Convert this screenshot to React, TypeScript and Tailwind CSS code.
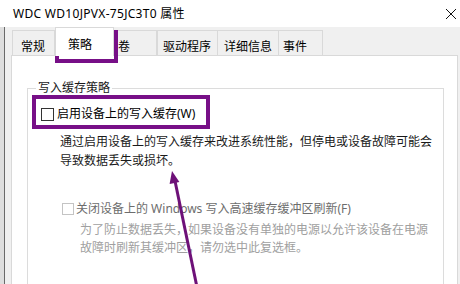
import React from "react";

const font = { fontFamily: '"Noto Sans", "Noto Sans CJK SC", sans-serif' };

function Tab({ label, className, textClass }: { label: string; className: string; textClass: string }) {
  return (
    <div className={`flex h-[25px] items-center border border-b-0 border-[#d9d9d9] bg-[#f0f0f0] pt-[7px] ${className}`}>
      <span className={`text-[12px] leading-[16px] text-black ${textClass}`}>{label}</span>
    </div>
  );
}

export default function App() {
  return (
    <div className="relative h-[284px] w-[460px] overflow-hidden bg-[#f0f0f0]" style={font}>
      {/* title bar */}
      <div className="flex h-[27px] items-center justify-between bg-white pl-[13px] pr-[2px]">
        <span className="text-[12px] leading-[16px] tracking-[0.3px] text-black">WDC WD10JPVX-75JC3T0 属性</span>
        <svg width="12" height="12" viewBox="0 0 12 12" className="mr-[1px]">
          <path d="M1 1 L11 11 M11 1 L1 11" stroke="#111" strokeWidth="1" fill="none" />
        </svg>
      </div>

      <div className="flex h-[257px]">
        {/* edge of the window behind */}
        <div className="w-[5px] border-r border-[#6a6a6a] bg-[#dedede]" />

        <div className="flex flex-1 flex-col pl-[6px] pr-[2px]">
          {/* tabs */}
          <div className="flex h-[31px] items-end pl-[1px]">
            <Tab label="常规" className="w-[43px]" textClass="pl-[8px]" />
            <div className="relative z-10 -mb-px flex h-[29px] w-[59px] items-center border border-b-0 border-[#d9d9d9] bg-white pt-[5px]">
              <span className="pl-[12px] text-[12px] leading-[16px] text-black">策略</span>
            </div>
            <Tab label="卷" className="w-[43px] border-l-0" textClass="pl-[4px]" />
            <Tab label="驱动程序" className="w-[61px]" textClass="pl-[5px]" />
            <Tab label="详细信息" className="w-[61px] border-l-0" textClass="pl-[6px]" />
            <Tab label="事件" className="w-[44px] border-l-0" textClass="pl-[4px]" />
          </div>

          {/* page */}
          <div className="flex-1 border border-b-0 border-[#d9d9d9] bg-white pl-[15px] pr-[13px] pt-[24px]">
            <fieldset className="h-[240px] border border-[#dcdcdc]">
              <legend className="ml-[8px] px-[2px] text-[12px] leading-[16px] text-[#1a1a1a]">写入缓存策略</legend>

              <div className="flex items-center pl-[13px] pt-[10px]">
                <span className="h-[13px] w-[13px] border border-[#333333] bg-white" />
                <span className="pl-[3px] text-[12px] leading-[16px] text-black">启用设备上的写入缓存(W)</span>
              </div>
              <p className="mt-[10px] pl-[32px] text-[12px] leading-[19px] text-[#1a1a1a]">
                通过启用设备上的写入缓存来改进系统性能，但停电或设备故障可能会
                <br />
                导致数据丢失或损坏。
              </p>

              <div className="mt-[31px] flex items-center pl-[34px]">
                <span className="h-[12px] w-[12px] border border-[#c4c4c4] bg-white" />
                <span className="pl-[2px] text-[12px] leading-[16px] text-[#6d6d6d]">关闭设备上的 Windows 写入高速缓存缓冲区刷新(F)</span>
              </div>
              <p className="mt-[4px] pl-[52px] text-[12px] leading-[18px] text-[#a0a0a0]">
                为了防止数据丢失，如果设备没有单独的电源以允许该设备在电源
                <br />
                故障时刷新其缓冲区，请勿选中此复选框。
              </p>
            </fieldset>
          </div>
        </div>
      </div>

      {/* annotations */}
      <div className="absolute left-[55px] top-[30px] h-[33px] w-[63px] border-[4px] border-[#770f87]" />
      <div className="absolute left-[32px] top-[95px] h-[34px] w-[178px] border-[4px] border-[#770f87]" />
      <svg className="absolute left-0 top-0" width="460" height="284" viewBox="0 0 460 284">
        <line x1="198" y1="292" x2="174.8" y2="180" stroke="#6e1178" strokeWidth="3" />
        <polygon points="172,171 179.4,182 169.6,184" fill="#6e1178" />
      </svg>
    </div>
  );
}
